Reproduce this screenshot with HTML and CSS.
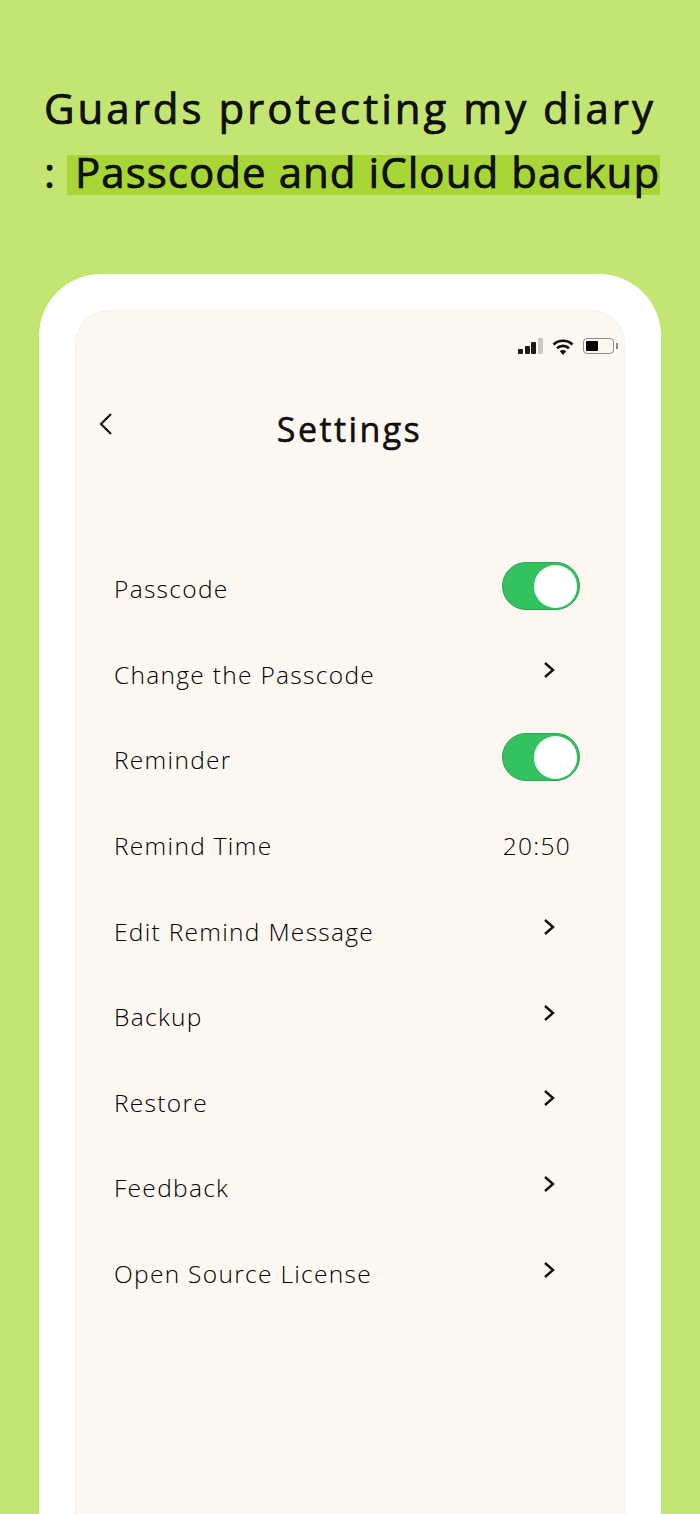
FILE: index.html
```html
<!DOCTYPE html>
<html lang="en">
<head>
  <meta charset="UTF-8">
  <meta name="viewport" content="width=device-width, initial-scale=1.0">
  <title>Settings</title>
  <link rel="stylesheet" href="styles.css">
</head>
<body>
  <header class="headline">
    <h1 class="headline-line headline-top">Guards protecting my diary</h1>
    <p class="headline-line"><span class="colon">:</span><span class="marker">Passcode and iCloud backup</span></p>
  </header>

  <div class="phone">
    <div class="screen">
      <div class="status">
        <svg class="status-signal" width="26" height="18" viewBox="0 0 26 18">
          <rect x="0" y="11" width="5" height="5" rx="1" fill="#1a1a1a"/>
          <rect x="7" y="8" width="5" height="8" rx="1" fill="#1a1a1a"/>
          <rect x="13" y="4" width="5" height="12" rx="1" fill="#1a1a1a"/>
          <rect x="20" y="0" width="5" height="16" rx="1" fill="#c9c9c5"/>
        </svg>
        <svg class="status-wifi" width="22" height="18" viewBox="0 0 22 18">
          <path d="M1.5 6.5a14 14 0 0 1 19 0" fill="none" stroke="#111" stroke-width="2.6"/>
          <path d="M5 10.2a9 9 0 0 1 12 0" fill="none" stroke="#111" stroke-width="2.6"/>
          <path d="M7.8 13.2a4.6 4.6 0 0 1 6.4 0L11 17z" fill="#111"/>
        </svg>
        <div class="battery"><div class="battery-level"></div></div>
        <div class="battery-cap"></div>
      </div>

      <div class="nav">
        <svg class="nav-back" width="16" height="24" viewBox="0 0 16 24">
          <path d="M13 2 3 12l10 10" fill="none" stroke="#111" stroke-width="2.2"/>
        </svg>
        <h2 class="nav-title">Settings</h2>
      </div>

      <ul class="list">
        <li class="row">
          <span class="row-label">Passcode</span>
          <span class="toggle"><span class="toggle-knob"></span></span>
        </li>
        <li class="row">
          <span class="row-label">Change the Passcode</span>
          <svg class="chevron" width="12" height="18" viewBox="0 0 12 18"><path d="M2 2l8 7-8 7" fill="none" stroke="#111" stroke-width="2.4"/></svg>
        </li>
        <li class="row">
          <span class="row-label">Reminder</span>
          <span class="toggle"><span class="toggle-knob"></span></span>
        </li>
        <li class="row">
          <span class="row-label">Remind Time</span>
          <span class="row-value">20:50</span>
        </li>
        <li class="row">
          <span class="row-label">Edit Remind Message</span>
          <svg class="chevron" width="12" height="18" viewBox="0 0 12 18"><path d="M2 2l8 7-8 7" fill="none" stroke="#111" stroke-width="2.4"/></svg>
        </li>
        <li class="row">
          <span class="row-label">Backup</span>
          <svg class="chevron" width="12" height="18" viewBox="0 0 12 18"><path d="M2 2l8 7-8 7" fill="none" stroke="#111" stroke-width="2.4"/></svg>
        </li>
        <li class="row">
          <span class="row-label">Restore</span>
          <svg class="chevron" width="12" height="18" viewBox="0 0 12 18"><path d="M2 2l8 7-8 7" fill="none" stroke="#111" stroke-width="2.4"/></svg>
        </li>
        <li class="row">
          <span class="row-label">Feedback</span>
          <svg class="chevron" width="12" height="18" viewBox="0 0 12 18"><path d="M2 2l8 7-8 7" fill="none" stroke="#111" stroke-width="2.4"/></svg>
        </li>
        <li class="row">
          <span class="row-label">Open Source License</span>
          <svg class="chevron" width="12" height="18" viewBox="0 0 12 18"><path d="M2 2l8 7-8 7" fill="none" stroke="#111" stroke-width="2.4"/></svg>
        </li>
      </ul>
    </div>
  </div>
</body>
</html>
```

FILE: styles.css
```css
html, body {
  height: 1514px;
  overflow: hidden;
}
body {
  margin: 0;
  background: #c3e572;
  font-family: "Open Sans", "Noto Sans", sans-serif;
  color: #111;
}
.headline {
  height: 274px;
  box-sizing: border-box;
  padding: 76px 0 0 44px;
}
.headline-line {
  margin: 0;
  height: 64px;
  line-height: 64px;
  font-size: 42px;
  font-weight: 400;
  letter-spacing: 1.2px;
  white-space: nowrap;
  display: flex;
  -webkit-text-stroke: 0.7px #000;
}
.headline-top {
  letter-spacing: 3px;
}
.colon {
  width: 23px;
}
.marker {
  width: 593px;
  height: 40px;
  margin-top: 15px;
  padding-left: 8px;
  box-sizing: border-box;
  line-height: 34px;
  background: #a8d636;
  letter-spacing: 1.05px;
}
.phone {
  margin: 0 39px;
  height: 1300px;
  box-sizing: border-box;
  padding: 36px 36px 0;
  background: #fff;
  border-radius: 62px 62px 0 0;
}
.screen {
  height: 1264px;
  background: #fcf7f0;
  border-radius: 34px 34px 0 0;
  box-shadow: inset 0 0 2px rgba(120, 100, 70, 0.12);
}
.status {
  height: 74px;
  box-sizing: border-box;
  padding: 28px 7px 0 0;
  display: flex;
  justify-content: flex-end;
  align-items: flex-start;
}
.status-signal {
  margin-right: 8px;
}
.status-wifi {
  margin-right: 9px;
}
.battery {
  width: 31px;
  height: 16px;
  box-sizing: border-box;
  padding: 2px;
  border: 1.5px solid #8a8a86;
  border-radius: 4px;
}
.battery-level {
  width: 12px;
  height: 100%;
  background: #000;
  border-radius: 1px;
}
.battery-cap {
  width: 2px;
  height: 6px;
  margin: 5px 0 0 2px;
  background: #8a8a86;
}
.nav {
  height: 162px;
  box-sizing: border-box;
  padding-left: 23px;
  display: flex;
  align-items: flex-start;
}
.nav-back {
  margin-top: 28px;
  flex: none;
}
.nav-title {
  flex: 1;
  margin: 20px 0 0;
  padding-right: 40px;
  text-align: center;
  font-size: 34px;
  line-height: 50px;
  font-weight: 400;
  letter-spacing: 2.4px;
  -webkit-text-stroke: 0.5px #000;
}
.list {
  list-style: none;
  margin: 0;
  padding: 0 45px 0 39px;
}
.row {
  height: 85.6px;
  display: flex;
  align-items: center;
  justify-content: space-between;
  font-size: 24.5px;
  font-weight: 300;
  letter-spacing: 1.3px;
  color: #000;
}
.row-value {
  margin-right: 9px;
}
.toggle {
  width: 78px;
  height: 48px;
  margin-top: -5px;
  box-sizing: border-box;
  padding: 2px;
  background: #34c15f;
  border: 1px solid #2aa650;
  border-radius: 24px;
  display: flex;
  justify-content: flex-end;
}
.toggle-knob {
  width: 43px;
  height: 43px;
  background: #fff;
  border-radius: 50%;
}
.chevron {
  margin: -8px 25px 0 0;
}
```
